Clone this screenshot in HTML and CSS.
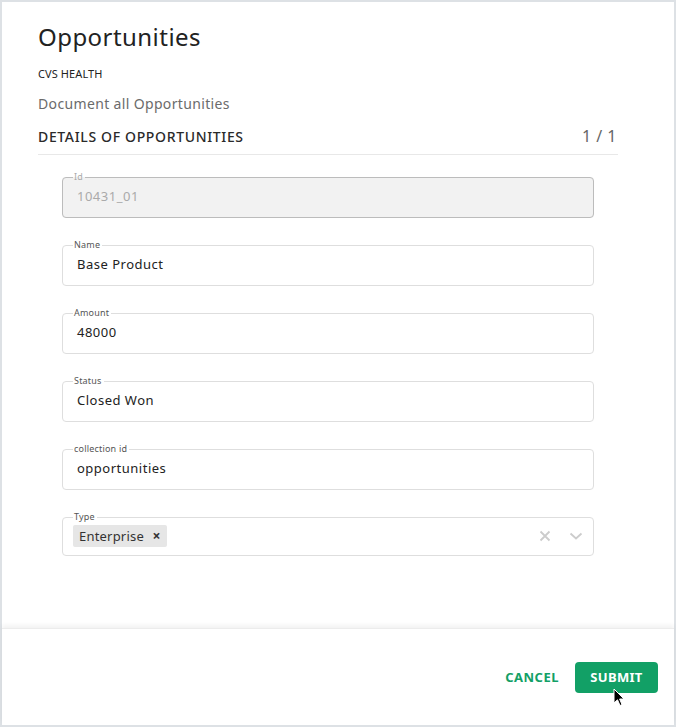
FILE: index.html
```html
<!DOCTYPE html>
<html>
<head>
<meta charset="utf-8">
<link rel="stylesheet" href="styles.css">
</head>
<body>
<div class="panel">
  <div class="content">
    <h1 class="title">Opportunities</h1>
    <div class="org">CVS HEALTH</div>
    <div class="desc">Document all Opportunities</div>
    <div class="section-head">
      <span class="section-title">DETAILS OF OPPORTUNITIES</span>
      <span class="pager">1 / 1</span>
    </div>
    <div class="fields">
      <fieldset class="field disabled"><legend>Id</legend><div class="value">10431_01</div></fieldset>
      <fieldset class="field"><legend>Name</legend><div class="value">Base Product</div></fieldset>
      <fieldset class="field"><legend>Amount</legend><div class="value">48000</div></fieldset>
      <fieldset class="field"><legend>Status</legend><div class="value">Closed Won</div></fieldset>
      <fieldset class="field"><legend>collection id</legend><div class="value">opportunities</div></fieldset>
      <fieldset class="field select"><legend>Type</legend>
        <div class="select-row">
          <span class="chip">Enterprise <span class="chip-x">×</span></span>
          <span class="indicators">
            <svg width="12" height="12" viewBox="0 0 12 12"><path d="M1.5 1.5 L10.5 10.5 M10.5 1.5 L1.5 10.5" stroke="#cccccc" stroke-width="1.8" fill="none"/></svg>
            <svg width="14" height="10" viewBox="0 0 14 10"><path d="M1.5 2.5 L7 7.5 L12.5 2.5" stroke="#cccccc" stroke-width="1.8" fill="none"/></svg>
          </span>
        </div>
      </fieldset>
    </div>
  </div>
  <div class="footer">
    <button class="btn-cancel">CANCEL</button>
    <button class="btn-submit">SUBMIT</button>
    <svg class="cursor" width="14" height="20" viewBox="0 0 14 20"><path d="M1 1 L1 15 L4.5 11.8 L7 17.5 L9 16.6 L6.6 11 L11 11 Z" fill="#000" stroke="#fff" stroke-width="1"/></svg>
  </div>
</div>
</body>
</html>
```
FILE: styles.css
```css
html, body { margin: 0; padding: 0; }
body {
  background: #dde1e5;
  font-family: "Noto Sans", "DejaVu Sans", sans-serif;
  color: #222;
  width: 676px;
  height: 727px;
  padding: 2px;
  box-sizing: border-box;
}
.panel {
  background: #fff;
  width: 672px;
  height: 723px;
  display: flex;
  flex-direction: column;
}
.content {
  height: 626px;
  padding: 0 56px 0 36px;
  box-sizing: border-box;
}
.title {
  margin: 18px 0 0 0;
  font-size: 24px;
  font-weight: 400;
  line-height: 34px;
  color: #222;
  letter-spacing: 0.45px;
}
.org {
  font-size: 11px;
  margin-top: 12px;
  line-height: 15px;
  color: #222;
  letter-spacing: 0.1px;
}
.desc {
  font-size: 14px;
  color: #6b6b6b;
  margin-top: 13px;
  line-height: 20px;
  letter-spacing: 0.35px;
}
.section-head {
  margin-top: 10px;
  display: flex;
  justify-content: space-between;
  align-items: center;
  border-bottom: 1px solid #e8e8e8;
  padding-bottom: 6px;
  height: 24px;
}
.section-title {
  font-size: 14px;
  font-weight: 500;
  color: #2a2a2a;
  letter-spacing: 0.65px;
}
.pager {
  font-size: 16px;
  color: #666;
  margin-right: 1px;
  letter-spacing: 0.5px;
}
.fields {
  padding: 17px 24px 0 24px;
  display: flex;
  flex-direction: column;
  gap: 22px;
}
.field {
  margin: 0;
  border: 1px solid #dedede;
  border-radius: 4px;
  padding: 0 14px 0 10px;
  height: 46px;
  box-sizing: border-box;
  min-width: 0;
}
.field legend {
  font-size: 9px;
  color: #555;
  padding: 0 2px 0 1px;
  margin-left: 0;
  line-height: 10px;
  letter-spacing: 0.2px;
}
.field .value {
  font-size: 13px;
  color: #222;
  padding-left: 4px;
  line-height: 20px;
  margin-top: 4px;
  letter-spacing: 0.5px;
}
.field.disabled {
  background: #f2f2f2;
  border-color: #bcbcbc;
}
.field.disabled legend { color: #aaa; }
.field.disabled .value { color: #aaa; }
.field.select {
  height: 44px;
  padding-right: 8px;
}
.select-row {
  display: flex;
  justify-content: space-between;
  align-items: center;
  margin-top: 3px;
}
.chip {
  background: #e6e6e6;
  border-radius: 2px;
  font-size: 13px;
  color: #333;
  padding: 2px 6px 2px 6px;
  line-height: 18px;
  letter-spacing: 0.2px;
}
.chip-x {
  font-size: 14px;
  font-weight: 700;
  margin-left: 5px;
  color: #333;
}
.indicators {
  display: flex;
  align-items: center;
  gap: 18px;
  padding-right: 2px;
}
.footer {
  position: relative;
  height: 97px;
  box-shadow: 0 -3px 4px rgba(0,0,0,0.05);
  border-top: 1px solid #ececec;
  display: flex;
  justify-content: flex-end;
  align-items: center;
  padding-right: 16px;
  gap: 16px;
  box-sizing: border-box;
}
.btn-cancel {
  background: none;
  border: none;
  color: #13a066;
  font-family: inherit;
  font-size: 13px;
  font-weight: 700;
  letter-spacing: 0.5px;
  padding: 0;
}
.btn-submit {
  background: #12a066;
  border: none;
  color: #fff;
  border-radius: 4px;
  font-family: inherit;
  font-size: 13px;
  font-weight: 700;
  width: 83px;
  height: 31px;
  letter-spacing: 0.3px;
}
.cursor {
  position: absolute;
  left: 611px;
  top: 59px;
}
```
